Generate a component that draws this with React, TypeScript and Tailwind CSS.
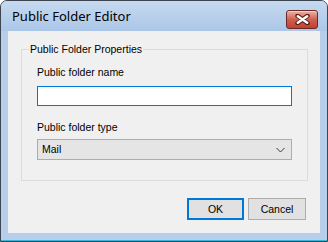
const ui = "font-['Liberation_Sans',Arial,sans-serif] text-[10.5px] leading-[13px] text-black"

function CloseButton() {
  return (
    <div className="mt-[9px] mr-[9px] w-[32px] h-[19px] rounded-[3px] border border-[#6a2a22] bg-linear-to-b from-[#e9b2a7] via-[#cf5f4f] to-[#c2402e] flex items-center justify-center shadow-[inset_0_1px_0_rgba(255,255,255,0.45)]">
      <svg width="15" height="11" viewBox="0 0 15 11">
        <path
          d="M2.5 1.8 L7.5 5.5 L12.5 1.8 M2.5 9.2 L7.5 5.5 L12.5 9.2"
          stroke="#5a1f18"
          strokeWidth="4.4"
          strokeLinecap="round"
          fill="none"
        />
        <path
          d="M2.8 2.2 L7.5 5.5 L12.2 2.2 M2.8 8.8 L7.5 5.5 L12.2 8.8"
          stroke="#ffffff"
          strokeWidth="2.4"
          strokeLinecap="round"
          fill="none"
        />
      </svg>
    </div>
  )
}

export default function App() {
  return (
    <div className="w-[328px] h-[242px] bg-white">
      <div className="w-[328px] h-[242px] flex flex-col rounded-t-[7px] border border-[#3d4650] bg-[#b7cfeb] overflow-hidden">
        {/* title bar */}
        <div className="h-[30px] shrink-0 flex items-start justify-between bg-linear-to-b from-[#c6daf0] to-[#abc6e7]">
          <span className="pl-[11px] pt-[7px] font-['Noto_Sans',sans-serif] text-[13px] leading-[17px] text-black">
            Public Folder Editor
          </span>
          <CloseButton />
        </div>

        {/* client area */}
        <div className="mx-[7px] h-[202px] shrink-0 bg-[#f0f0f0] pt-[18px] px-[13px]">
          <div className={`relative w-[287px] h-[132px] border border-[#dcdcdc] ${ui}`}>
            <span className="absolute left-[7px] top-[-7px] bg-[#f0f0f0] px-px">Public Folder Properties</span>

            <div className="pl-[15px] pt-[16px] flex flex-col">
              <span>Public folder name</span>
              <div className="mt-[7px] w-[255px] h-[20px] border border-[#0078d7] bg-white" />
              <span className="mt-[15px]">Public folder type</span>
              <div className="mt-[5px] w-[255px] h-[21px] border border-[#adadad] bg-[#e5e5e5] flex items-center justify-between pl-[4px] pr-[5px]">
                <span>Mail</span>
                <svg width="9" height="6" viewBox="0 0 9 6" className="mr-px">
                  <path d="M0.5 1 L4.5 5 L8.5 1" stroke="#3a3a3a" strokeWidth="1" fill="none" />
                </svg>
              </div>
            </div>
          </div>

          <div className="mt-[17px] flex justify-end gap-[4px] pr-[1px]">
            <button className={`w-[57px] h-[22px] border-2 border-[#0078d7] bg-[#e1e1e1] ${ui}`}>OK</button>
            <button className={`w-[58px] h-[22px] border border-[#adadad] bg-[#e1e1e1] ${ui}`}>Cancel</button>
          </div>
        </div>
        <div className="flex-1" />
        <div className="h-px bg-[#39b6d3]" />
      </div>
    </div>
  )
}
